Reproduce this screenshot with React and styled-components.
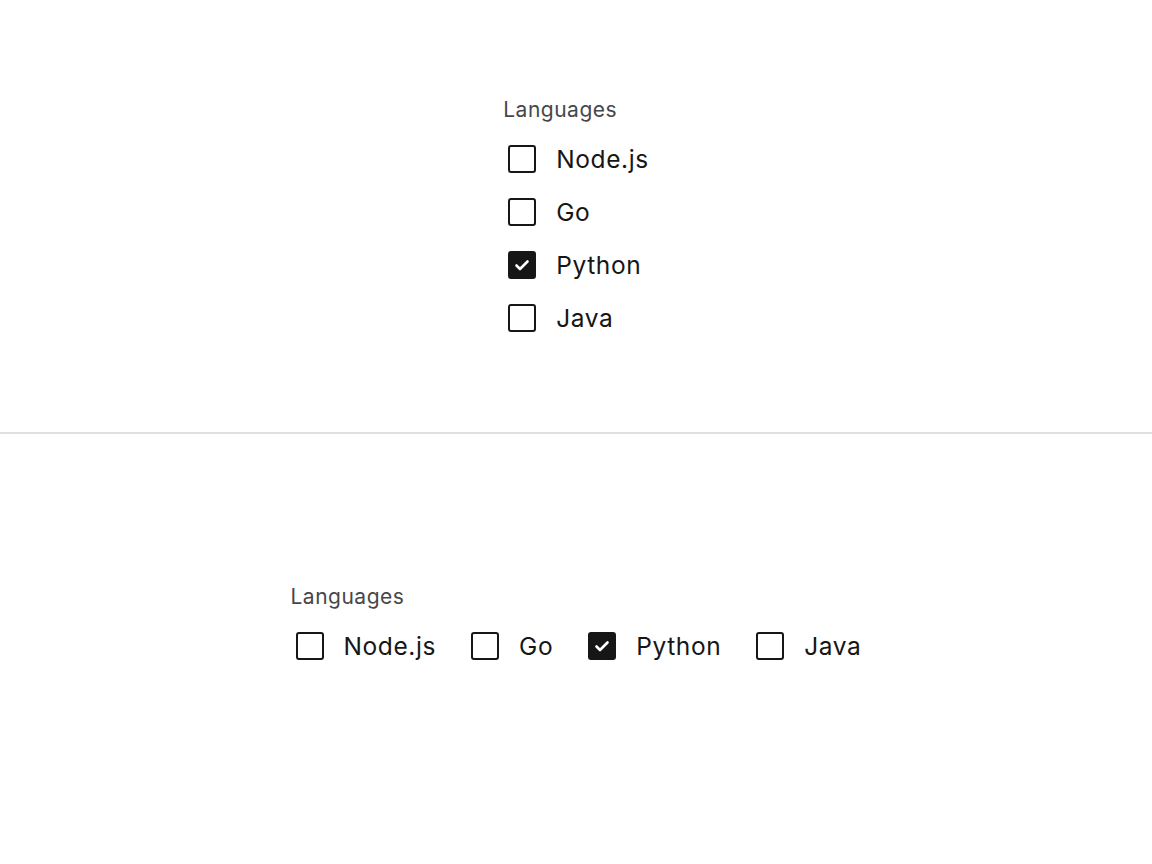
import React from "react"
import styled, { createGlobalStyle } from "styled-components"

const languages = ["Node.js", "Go", "Python", "Java"]

function Checkbox({ label, checked, onToggle }) {
  return (
    <Item>
      <HiddenInput type="checkbox" checked={checked} onChange={onToggle} />
      <Box checked={checked}>
        {checked && (
          <svg width="16" height="16" viewBox="0 0 16 16">
            <polyline points="2.5,8.5 6,12 13.5,4.5" fill="none" stroke="#ffffff" strokeWidth="2.6" strokeLinecap="round" strokeLinejoin="round" />
          </svg>
        )}
      </Box>
      <Text>{label}</Text>
    </Item>
  )
}

function Group({ horizontal }) {
  const [checked, setChecked] = React.useState({ Python: true })
  function toggle(name) {
    setChecked({ ...checked, [name]: !checked[name] })
  }
  return (
    <Fieldset>
      <Legend>Languages</Legend>
      <Options horizontal={horizontal}>
        {languages.map((name) => (
          <Checkbox key={name} label={name} checked={!!checked[name]} onToggle={() => toggle(name)} />
        ))}
      </Options>
    </Fieldset>
  )
}

export default function App() {
  return (
    <Page>
      <GlobalStyle />
      <Section top>
        <Group />
      </Section>
      <Section>
        <Group horizontal />
      </Section>
    </Page>
  )
}

const GlobalStyle = createGlobalStyle`
  html, body {
    margin: 0;
    padding: 0;
    background: #ffffff;
    font-family: Inter, "Noto Sans", "Liberation Sans", sans-serif;
  }
  * { box-sizing: border-box; }
`

const Page = styled.div`
  width: 100%;
  min-height: 864px;
  display: flex;
  flex-direction: column;
`

const Section = styled.div`
  height: ${(p) => (p.top ? "434px" : "430px")};
  display: flex;
  justify-content: center;
  align-items: flex-start;
  padding-top: ${(p) => (p.top ? "96px" : "149px")};
  border-bottom: ${(p) => (p.top ? "2px solid #e0e0e0" : "none")};
`

const Fieldset = styled.fieldset`
  border: none;
  margin: 0;
  padding: 0;
  min-width: 0;
`

const Legend = styled.legend`
  display: block;
  padding: 0;
  margin: 0 0 21px;
  font-size: 21px;
  line-height: 28px;
  letter-spacing: 0.5px;
  color: #474747;
`

const Options = styled.div`
  display: flex;
  flex-direction: ${(p) => (p.horizontal ? "row" : "column")};
  gap: ${(p) => (p.horizontal ? "30px" : "25px")};
`

const Item = styled.label`
  display: flex;
  align-items: center;
  gap: 20px;
  padding-left: 5px;
  height: 28px;
  cursor: pointer;
`

const HiddenInput = styled.input`
  position: absolute;
  opacity: 0;
  width: 1px;
  height: 1px;
  margin: 0;
`

const Box = styled.span`
  width: 28px;
  height: 28px;
  flex-shrink: 0;
  border: 2px solid #161616;
  border-radius: 3px;
  background: ${(p) => (p.checked ? "#161616" : "#ffffff")};
  display: flex;
  align-items: center;
  justify-content: center;
`

const Text = styled.span`
  font-size: 24.5px;
  line-height: 32px;
  letter-spacing: 0.6px;
  color: #161616;
`
